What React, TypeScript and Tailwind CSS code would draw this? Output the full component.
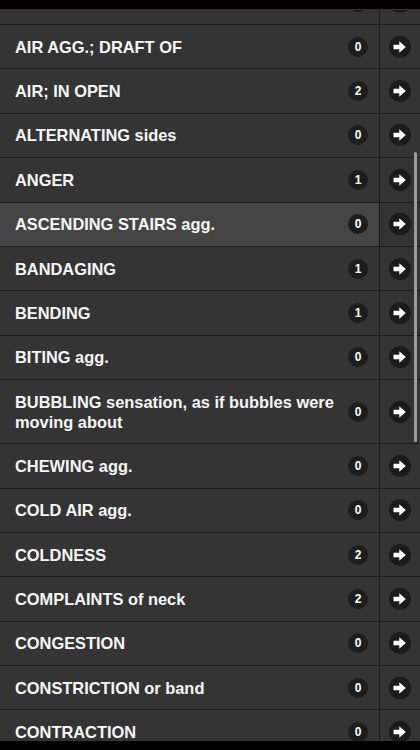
import React from 'react';

interface Entry {
  label: string;
  count?: number;
  active?: boolean;
  tall?: boolean;
}

const entries: Entry[] = [
  { label: '' }, // row scrolled away under the top edge, only its bottom shows
  { label: 'AIR AGG.; DRAFT OF', count: 0 },
  { label: 'AIR; IN OPEN', count: 2 },
  { label: 'ALTERNATING sides', count: 0 },
  { label: 'ANGER', count: 1 },
  { label: 'ASCENDING STAIRS agg.', count: 0, active: true },
  { label: 'BANDAGING', count: 1 },
  { label: 'BENDING', count: 1 },
  { label: 'BITING agg.', count: 0 },
  { label: 'BUBBLING sensation, as if bubbles were moving about', count: 0, tall: true },
  { label: 'CHEWING agg.', count: 0 },
  { label: 'COLD AIR agg.', count: 0 },
  { label: 'COLDNESS', count: 2 },
  { label: 'COMPLAINTS of neck', count: 2 },
  { label: 'CONGESTION', count: 0 },
  { label: 'CONSTRICTION or band', count: 0 },
  { label: 'CONTRACTION', count: 0 },
];

const ArrowButton = () => (
  <svg width="22" height="22" viewBox="0 0 22 22">
    <circle cx="11" cy="11" r="11" fill="#1b1b1b" />
    <path d="M4.5 8.7h5.8V5.2L16.8 11l-6.5 5.8v-3.5H4.5z" fill="#ffffff" />
  </svg>
);

const Row: React.FC<{ entry: Entry }> = ({ entry }) => (
  <div
    className={`flex border-b border-[#1c1c1c] ${entry.tall ? 'h-[64px]' : 'h-[44.4px]'} ${
      entry.active ? 'bg-[#454545]' : 'bg-[#343434]'
    }`}
  >
    <div className="flex flex-1 items-center pl-[15px] pr-[11px]">
      <span className="flex-1 pr-[8px] text-[16.4px] font-bold leading-5 text-[#f6f6f6]">{entry.label}</span>
      <span className="flex h-[20px] w-[20px] items-center justify-center rounded-full bg-[#1d1d1d] text-[12px] font-bold text-white">
        {entry.count}
      </span>
    </div>
    <div className="flex w-[41px] items-center justify-center border-l border-[#1c1c1c] bg-[#343434]">
      <ArrowButton />
    </div>
  </div>
);

export default function App() {
  return (
    <div className="relative flex h-[750px] w-[420px] flex-col overflow-hidden bg-black font-['Liberation_Sans',Arial,sans-serif]">
      <div className="h-[9px] bg-black" />
      <div className="h-px bg-[#4a2424]" />
      <div className="h-[731px] overflow-hidden bg-[#343434]">
        <div className="mt-[-29.4px]">
          {entries.map((e, i) => (
            <Row key={i} entry={e} />
          ))}
        </div>
      </div>
      <div className="h-[9px] bg-black" />
      {/* scroll indicator */}
      <div className="absolute right-[3px] top-[152px] h-[290px] w-[3px] rounded-full bg-[#9c9c9c]" />
    </div>
  );
}
